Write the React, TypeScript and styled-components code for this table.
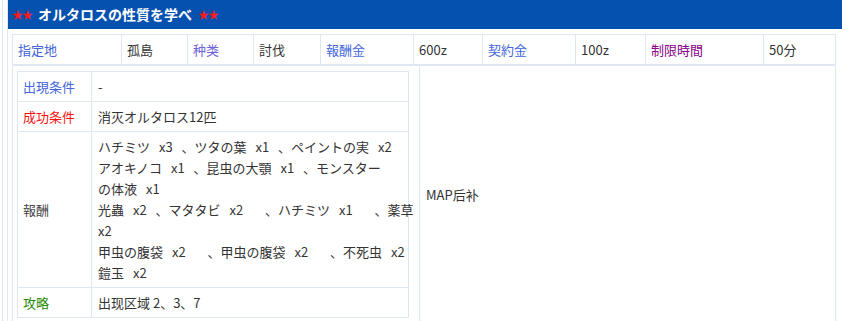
import styled, { createGlobalStyle } from 'styled-components';

const GlobalStyle = createGlobalStyle`
	html, body {
		margin: 0;
		padding: 0;
		background: #fff;
	}
	body {
		font-family: "Noto Sans CJK JP", "Noto Sans CJK SC", sans-serif;
		font-size: 13px;
		color: #333;
		overflow: hidden;
	}
`;

type Tone = 'blue' | 'violet' | 'purple' | 'red' | 'green' | 'plain';

const toneColor: Record<Tone, string> = {
	blue: '#4466dd',
	violet: '#6d62dc',
	purple: '#880088',
	red: '#ff1010',
	green: '#1f8a00',
	plain: '#444',
};

const topRow: { label: string; tone: Tone; value: string }[] = [
	{ label: '指定地', tone: 'blue', value: '孤島' },
	{ label: '种类', tone: 'violet', value: '討伐' },
	{ label: '報酬金', tone: 'blue', value: '600z' },
	{ label: '契約金', tone: 'blue', value: '100z' },
	{ label: '制限時間', tone: 'purple', value: '50分' },
];

// 上の表の列幅（ボーダー位置から割り出した値）
const topCols = [109, 66, 66, 67, 93, 69, 93, 70, 118, 72];

const rewardLines = [
	'ハチミツ x3 、ツタの葉 x1 、ペイントの実 x2',
	'アオキノコ x1 、昆虫の大顎 x1 、モンスター',
	'の体液 x1',
	'光蟲 x2 、マタタビ x2 　、ハチミツ x1 　、薬草',
	'x2',
	'甲虫の腹袋 x2 　、甲虫の腹袋 x2 　、不死虫 x2',
	'鎧玉 x2',
];

export default function App() {
	return (
		<>
			<GlobalStyle />
			<Page>
				<Frame>
					<Panel>
						<Title>
							<Stars>★★</Stars>
							<TitleText>オルタロスの性質を学べ</TitleText>
							<Stars>★★</Stars>
						</Title>
						<PanelBody>
							<TopTable>
								<colgroup>
									{topCols.map((w, i) => (
										<col key={i} style={{ width: w }} />
									))}
								</colgroup>
								<tbody>
									<tr>
										{topRow.map((c) => (
											<TopPair key={c.label} {...c} />
										))}
									</tr>
								</tbody>
							</TopTable>
							<DetailTable>
								<colgroup>
									<col style={{ width: 407 }} />
									<col style={{ width: 416 }} />
								</colgroup>
								<tbody>
									<tr>
										<InfoCell>
											<InfoTable>
												<colgroup>
													<col style={{ width: 74 }} />
													<col style={{ width: 317 }} />
												</colgroup>
												<tbody>
													<tr>
														<Label $tone="blue">出現条件</Label>
														<Value>-</Value>
													</tr>
													<tr>
														<Label $tone="red">成功条件</Label>
														<Value>消灭オルタロス12匹</Value>
													</tr>
													<tr>
														<Label $tone="plain">報酬</Label>
														<RewardValue>
															{rewardLines.map((l, i) => (
																<RewardLine key={i}>{l}</RewardLine>
															))}
														</RewardValue>
													</tr>
													<tr>
														<Label $tone="green">攻略</Label>
														<Value>出现区域 2、3、7</Value>
													</tr>
												</tbody>
											</InfoTable>
										</InfoCell>
										<MapCell>MAP后补</MapCell>
									</tr>
								</tbody>
							</DetailTable>
						</PanelBody>
					</Panel>
				</Frame>
			</Page>
		</>
	);
}

const TopPair = ({ label, tone, value }: { label: string; tone: Tone; value: string }) => (
	<>
		<TopLabel $tone={tone}>{label}</TopLabel>
		<TopValue>{value}</TopValue>
	</>
);

const line = '#dfe8f2';

const Page = styled.div`
	padding-left: 2px;
`;

const Frame = styled.div`
	border-left: 1px solid ${line};
	padding-left: 4px;
	min-height: 321px;
`;

const Panel = styled.div`
	width: 840px;
	border-left: 1px solid ${line};
	min-height: 330px;
`;

const Title = styled.div`
	display: flex;
	align-items: center;
	gap: 6px;
	height: 29px;
	padding-left: 4px;
	background: #0551b0;
	color: #fff;
	font-weight: bold;
	font-size: 14px;
`;

const Stars = styled.span`
	color: #ff1a1a;
	font-size: 11px;
	letter-spacing: -1px;
	line-height: 1;
`;

const TitleText = styled.span`
	line-height: 1;
	padding-bottom: 1px;
`;

const PanelBody = styled.div`
	padding: 5px 0 0 4px;
`;

const BaseTable = styled.table`
	border-collapse: collapse;
	table-layout: fixed;
	background: #fff;

	td {
		border: 1px solid ${line};
		line-height: 19px;
		padding: 5px 6px 5px 5px;
		vertical-align: middle;
		white-space: nowrap;
	}
`;

const TopTable = styled(BaseTable)`
	width: 824px;
`;

const DetailTable = styled(BaseTable)`
	width: 824px;
	border-top: 1px solid ${line};

	& > tbody > tr > td {
		border-top: none;
	}
`;

const TopLabel = styled.td<{ $tone: Tone }>`
	color: ${(p) => toneColor[p.$tone]};
`;

const TopValue = styled.td`
	color: #333;
`;

const InfoCell = styled.td`
	&& {
		padding: 5px 11px 5px 4px;
	}
`;

const InfoTable = styled(BaseTable)`
	width: 391px;
`;

const Label = styled.td<{ $tone: Tone }>`
	&& {
		color: ${(p) => toneColor[p.$tone]};
		padding-left: 5px;
	}
`;

const Value = styled.td`
	&& {
		padding: 5px 6px 5px 6px;
		color: #333;
	}
`;

const RewardValue = styled(Value)`
	&&& {
		padding: 4px 6px 4px 6px;
	}
`;

const RewardLine = styled.div`
	line-height: 21px;
	word-spacing: 6px;
`;

const MapCell = styled.td`
	&& {
		padding-left: 6px;
		color: #333;
	}
`;
